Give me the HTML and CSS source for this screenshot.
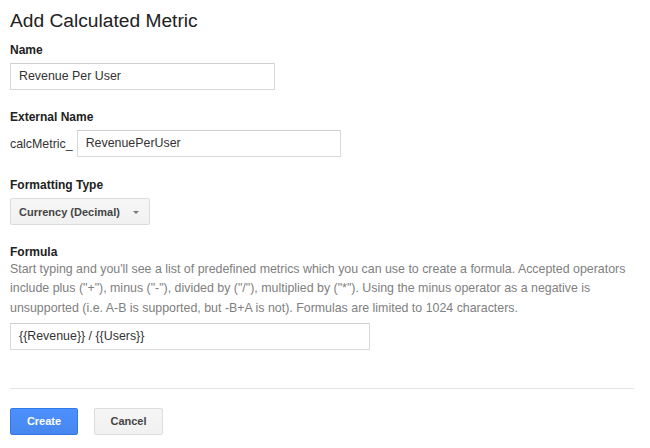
FILE: index.html
```html
<!DOCTYPE html>
<html>
<head>
<meta charset="utf-8">
<link rel="stylesheet" href="styles.css">
</head>
<body>
<div class="page">
  <h1 class="title">Add Calculated Metric</h1>

  <div class="field field-name">
    <div class="label">Name</div>
    <div class="input input-name">Revenue Per User</div>
  </div>

  <div class="field field-ext">
    <div class="label">External Name</div>
    <div class="ext-row">
      <span class="prefix">calcMetric_</span>
      <div class="input input-ext">RevenuePerUser</div>
    </div>
  </div>

  <div class="field field-format">
    <div class="label">Formatting Type</div>
    <div class="select">
      <span class="select-text">Currency (Decimal)</span>
      <span class="arrow"></span>
    </div>
  </div>

  <div class="field field-formula">
    <div class="label label-tight">Formula</div>
    <p class="help">Start typing and you'll see a list of predefined metrics which you can use to create a formula. Accepted operators include plus ("+"), minus ("-"), divided by ("/"), multiplied by ("*"). Using the minus operator as a negative is unsupported (i.e. A-B is supported, but -B+A is not). Formulas are limited to 1024 characters.</p>
    <div class="input input-formula">{{Revenue}} / {{Users}}</div>
  </div>

  <div class="divider"></div>

  <div class="actions">
    <div class="btn btn-primary">Create</div>
    <div class="btn btn-default">Cancel</div>
  </div>
</div>
</body>
</html>
```

FILE: styles.css
```css
html, body {
  margin: 0;
  padding: 0;
  background: #ffffff;
}
body {
  font-family: "Liberation Sans", Arial, Helvetica, sans-serif;
  color: #333333;
}
.page {
  padding: 0 10px;
  width: 630px;
}
.title {
  margin: 9px 0 0;
  font-size: 19.2px;
  line-height: 24px;
  font-weight: normal;
  color: #222222;
}
.field-name { margin-top: 9px; }
.field-ext { margin-top: 19px; }
.field-format { margin-top: 20px; }
.field-formula { margin-top: 19px; }

.label {
  font-size: 12px;
  line-height: 16px;
  font-weight: bold;
  color: #222222;
  margin-bottom: 5px;
}
.label-tight {
  margin-bottom: 0;
}
.input {
  box-sizing: border-box;
  height: 27px;
  border: 1px solid #d9d9d9;
  border-top-color: #cfcfcf;
  padding: 0 8px;
  font-size: 12.4px;
  line-height: 25px;
  color: #333333;
  background: #ffffff;
  white-space: nowrap;
}
.input-name { width: 265px; }
.input-ext { width: 264px; }
.input-formula { width: 360px; }

.ext-row {
  display: flex;
  align-items: center;
  gap: 4px;
}
.prefix {
  font-size: 12.4px;
  color: #333333;
}

.select {
  box-sizing: border-box;
  width: 140px;
  height: 27px;
  border: 1px solid #dcdcdc;
  border-radius: 2px;
  background: linear-gradient(#f6f6f6, #f1f1f1);
  display: flex;
  align-items: center;
  padding: 0 0 0 8px;
}
.select-text {
  font-size: 11px;
  font-weight: bold;
  color: #444444;
}
.arrow {
  margin-left: 13px;
  width: 0;
  height: 0;
  border-left: 3px solid transparent;
  border-right: 3px solid transparent;
  border-top: 3px solid #777777;
  margin-top: 2px;
}

.help {
  margin: 0 0 5px;
  font-size: 12.4px;
  line-height: 19.3px;
  color: #808080;
}

.divider {
  margin-top: 38px;
  height: 1px;
  background: #e5e5e5;
  width: 624px;
}

.actions {
  margin-top: 19px;
  display: flex;
  gap: 16px;
}
.btn {
  box-sizing: border-box;
  height: 27px;
  line-height: 25px;
  border-radius: 2px;
  font-size: 11px;
  font-weight: bold;
  text-align: center;
}
.btn-primary {
  width: 68px;
  background: linear-gradient(#4d90fe, #4787ed);
  border: 1px solid #3079ed;
  color: #ffffff;
}
.btn-default {
  width: 69px;
  background: linear-gradient(#f5f5f5, #f1f1f1);
  border: 1px solid #dcdcdc;
  color: #444444;
}
```
